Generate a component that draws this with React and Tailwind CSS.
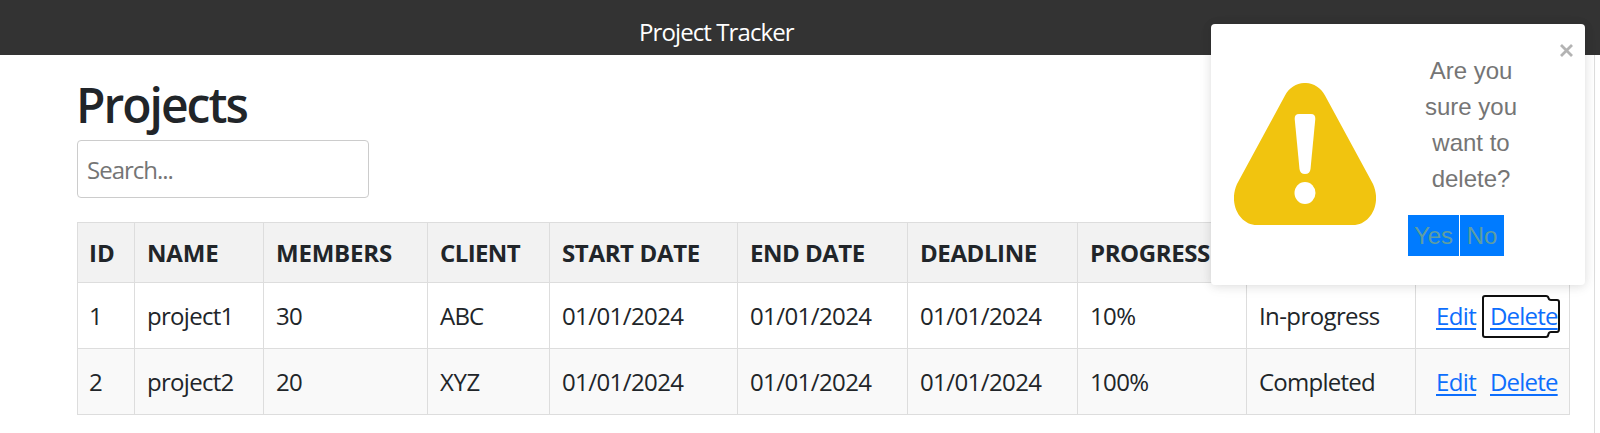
const columns = [
  { label: "ID", width: "w-[57px]", head: "relative -left-px" },
  { label: "NAME", width: "w-[129px]", head: "tracking-[-0.15px]" },
  { label: "MEMBERS", width: "w-[164px]", head: "tracking-[-0.2px]" },
  { label: "CLIENT", width: "w-[122px]", head: "tracking-[-0.6px]" },
  { label: "START DATE", width: "w-[188px]", head: "tracking-[-0.35px]" },
  { label: "END DATE", width: "w-[170px]", head: "tracking-[-0.5px]" },
  { label: "DEADLINE", width: "w-[170px]", head: "tracking-[-0.4px]" },
  { label: "PROGRESS", width: "w-[169px]", head: "tracking-[-0.4px]" },
  { label: "STATUS", width: "w-[169px]", head: "tracking-[-0.6px]" },
  { label: "", width: "w-[154px]", head: "" },
];

const date = "tracking-[-0.6px]";
const rows = [
  [["1", "relative -left-px"], ["project1", "tracking-[-0.7px]"], ["30", date], ["ABC", "tracking-[-0.8px]"], ["01/01/2024", date], ["01/01/2024", date], ["01/01/2024", date], ["10%", date], ["In-progress", "tracking-[-0.6px]"]],
  [["2", "relative -left-px"], ["project2", "tracking-[-0.7px]"], ["20", date], ["XYZ", "tracking-[-0.4px]"], ["01/01/2024", date], ["01/01/2024", date], ["01/01/2024", date], ["100%", date], ["Completed", "tracking-[-0.75px]"]],
];

const cell = "border-r border-b border-[#dddddd] pl-[12px] text-left whitespace-nowrap";

function FocusRing() {
  return (
    <svg className="pointer-events-none absolute -top-[4px] -left-[9px]" width="80" height="46" viewBox="0 0 80 46" fill="none">
      <path d="M4 2H65Q67 2 67.500 4Q68 6 70 6H76Q78 6 78 8V35Q78 38 76 38H70Q68 38 67.500 40Q67 43 65 43H4Q2 43 2 41V4Q2 2 4 2Z" stroke="#101010" strokeWidth="2" />
    </svg>
  );
}

function Actions({ focused }) {
  return (
    <div className="flex pl-[8px] text-[#0d6efd]">
      <a className="w-[40px] tracking-[-0.65px] underline decoration-[1.5px] underline-offset-[3px]">Edit</a>
      <span className="relative ml-[14px]">
        <a className="tracking-[-0.8px] underline decoration-[1.5px] underline-offset-[3px]">Delete</a>
        {focused && <FocusRing />}
      </span>
    </div>
  );
}

function ProjectTable() {
  return (
    <table className="mt-6 w-[1493px] table-fixed border-separate border-spacing-0 border-t border-l border-[#dddddd] text-[24px] leading-9">
      <thead>
        <tr className="h-[60px] bg-[#f2f2f2]">
          {columns.map((c) => (
            <th key={c.label} className={`${cell} ${c.width} font-bold`}>
              <span className={c.head}>{c.label}</span>
            </th>
          ))}
        </tr>
      </thead>
      <tbody>
        {rows.map((row, r) => (
          <tr key={r} className={r === 1 ? "h-[66px] bg-[#f9f9f9]" : "h-[66px]"}>
            {row.map(([text, tracking], i) => (
              <td key={i} className={cell}>
                <span className={tracking}>{text}</span>
              </td>
            ))}
            <td className={cell}>
              <Actions focused={r === 0} />
            </td>
          </tr>
        ))}
      </tbody>
    </table>
  );
}

function WarningIcon() {
  return (
    <svg width="142" height="142" viewBox="0 0 142 142" className="shrink-0">
      <path d="M51 12.500C59.500 -4.200 82.500 -4.200 91 12.500L139 101C148 121 136 142 119 142H23C6 142 -6 121 3 101Z" fill="#f1c40f" />
      <path d="M65 31H77Q81.500 31 81.300 36L76.500 86Q76 91 71 91Q66 91 65.500 86L60.700 36Q60.500 31 65 31Z" fill="#fff" />
      <ellipse cx="71" cy="110" rx="10.500" ry="11" fill="#fff" />
    </svg>
  );
}

function ConfirmToast() {
  return (
    <div className="absolute top-[24px] left-[1211px] flex h-[261px] w-[374px] rounded bg-white pt-[59px] pl-[23px] font-['Liberation_Sans',Arial,sans-serif] text-[24px] leading-9 text-[#757575] shadow-[0_1px_10px_0_rgba(0,0,0,0.1),0_2px_15px_0_rgba(0,0,0,0.05)]">
      <WarningIcon />
      <div className="-mt-[30px] ml-[32px]">
        <p className="w-[126px] text-center">Are you sure you want to delete?</p>
        <div className="mt-[18px] flex gap-px text-[#5f9ea0]">
          <button className="h-[41px] w-[51px] bg-[#007bff]">Yes</button>
          <button className="h-[41px] w-[44px] bg-[#007bff]">No</button>
        </div>
      </div>
      <svg className="absolute top-[20px] right-[12px]" width="13" height="13" viewBox="0 0 13 13" stroke="#b3b3b3" strokeWidth="2.800">
        <path d="M1 1L12 12M12 1L1 12" />
      </svg>
    </div>
  );
}

export default function App() {
  return (
    <div className="relative h-[433px] w-[1600px] overflow-hidden bg-white font-['Open_Sans','Noto_Sans',sans-serif] text-[#212529]">
      <header className="flex h-[55px] bg-[#333333] pt-[14px] pl-[639px] text-[24px] leading-9 text-white">
        <span className="tracking-[-0.9px]">Project Tracker</span>
      </header>
      <div className="flex h-[378px]">
        <main className="w-[1595px] border-r border-[#dddddd] pt-[20px] pl-[77px]">
          <h1 className="-ml-px h-[65px] pt-px text-[48px] leading-[58px] font-semibold tracking-[-2px]">Projects</h1>
          <input placeholder="Search..." className="block h-[58px] w-[292px] rounded border border-[#cccccc] px-[9px] text-[24px] tracking-[-1px] placeholder:text-[#757575]" />
          <ProjectTable />
        </main>
      </div>
      <ConfirmToast />
    </div>
  );
}
